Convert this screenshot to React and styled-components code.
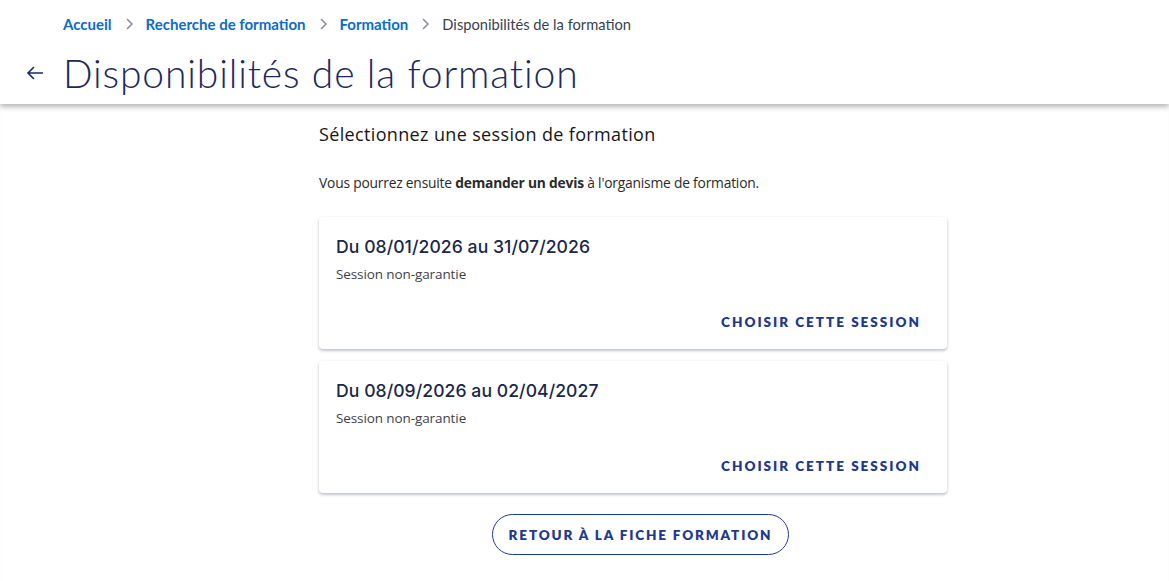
import React from "react";
import styled, { createGlobalStyle } from "styled-components";

const GlobalStyle = createGlobalStyle`
  * { box-sizing: border-box; }
  body {
    margin: 0;
    background: #fff;
    font-family: "Lato", "Noto Sans", sans-serif;
    color: #1f2a44;
  }
`;

const sessions = [
  { id: 1, from: "08/01/2026", to: "31/07/2026", status: "Session non-garantie" },
  { id: 2, from: "08/09/2026", to: "02/04/2027", status: "Session non-garantie" },
];

const crumbs = [
  { label: "Accueil", link: true },
  { label: "Recherche de formation", link: true },
  { label: "Formation", link: true },
  { label: "Disponibilités de la formation", link: false },
];

const App = () => {
  return (
    <Page>
      <GlobalStyle />
      <Header>
        <Breadcrumb>
          {crumbs.map((c, i) => (
            <React.Fragment key={c.label}>
              {i > 0 && (
                <Chevron viewBox="0 0 10 14" aria-hidden="true">
                  <path d="M3 2l5 5-5 5" fill="none" stroke="#8a8f9c" strokeWidth="1.6" />
                </Chevron>
              )}
              <Crumb $link={c.link}>{c.label}</Crumb>
            </React.Fragment>
          ))}
        </Breadcrumb>
        <TitleRow>
          <BackButton aria-label="Retour">
            <svg width="18" height="16" viewBox="0 0 18 16">
              <path
                d="M17 8H2M8 2L2 8l6 6"
                fill="none"
                stroke="#1b2a5c"
                strokeWidth="1.6"
              />
            </svg>
          </BackButton>
          <Title>Disponibilités de la formation</Title>
        </TitleRow>
      </Header>

      <Main>
        <Column>
          <Heading>Sélectionnez une session de formation</Heading>
          <Intro>
            Vous pourrez ensuite <strong>demander un devis</strong> à l'organisme de formation.
          </Intro>
          <CardList>
            {sessions.map((s) => (
              <Card key={s.id}>
                <CardTitle>
                  Du {s.from} au {s.to}
                </CardTitle>
                <CardSub>{s.status}</CardSub>
                <CardActions>
                  <TextButton>Choisir cette session</TextButton>
                </CardActions>
              </Card>
            ))}
          </CardList>
          <Footer>
            <OutlineButton>Retour à la fiche formation</OutlineButton>
          </Footer>
        </Column>
      </Main>
    </Page>
  );
};

const Page = styled.div`
  min-height: 100vh;
  background: #fff;
  box-shadow: inset 0 4px 4px -2px rgba(0, 0, 0, 0.08);
`;

const Header = styled.header`
  position: relative;
  z-index: 1;
  background: #fff;
  padding: 13px 0 0 0;
  height: 104px;
  box-shadow: 0 3px 5px rgba(0, 0, 0, 0.28);
`;

const Breadcrumb = styled.nav`
  display: flex;
  align-items: center;
  gap: 12px;
  padding-left: 63px;
  height: 22px;
`;

const Chevron = styled.svg`
  width: 10px;
  height: 14px;
`;

const Crumb = styled.span`
  font-family: "Lato", sans-serif;
  font-size: ${({ $link }) => ($link ? "15px" : "14.7px")};
  font-weight: ${({ $link }) => ($link ? 700 : 400)};
  color: ${({ $link }) => ($link ? "#0d6bc7" : "#3a3f4b")};
`;

const TitleRow = styled.div`
  display: flex;
  align-items: center;
  margin-top: 16px;
  padding-left: 26px;
`;

const BackButton = styled.button`
  border: none;
  background: none;
  padding: 0;
  margin-right: 19px;
  display: flex;
  align-items: center;
  cursor: pointer;
`;

const Title = styled.h1`
  margin: 0;
  font-family: "Lato", sans-serif;
  font-weight: 300;
  font-size: 39px;
  letter-spacing: 0.85px;
  line-height: 44px;
  color: #1b2a5c;
`;

const Main = styled.main`
  padding-left: 319px;
  width: 947px;
`;

const Column = styled.div`
  display: flex;
  flex-direction: column;
`;

const Heading = styled.h2`
  margin: 18px 0 0 0;
  font-family: "Open Sans", sans-serif;
  font-weight: 500;
  font-size: 18px;
  letter-spacing: 0.35px;
  line-height: 25px;
  color: #161616;
`;

const Intro = styled.p`
  margin: 26px 0 0 0;
  font-family: "Open Sans", sans-serif;
  font-size: 13.8px;
  letter-spacing: -0.2px;
  line-height: 20px;
  color: #2a2a2a;
  strong {
    font-weight: 700;
  }
`;

const CardList = styled.div`
  display: flex;
  flex-direction: column;
  gap: 12px;
  margin-top: 24px;
`;

const Card = styled.div`
  background: #fff;
  border-radius: 4px;
  height: 132px;
  padding: 18px 26px 0 17px;
  box-shadow: 0 1px 3px rgba(0, 0, 0, 0.12), 0 2px 3px rgba(60, 70, 110, 0.22);
  display: flex;
  flex-direction: column;
`;

const CardTitle = styled.div`
  font-family: "Inter", sans-serif;
  font-weight: 500;
  font-size: 17.6px;
  letter-spacing: 0.05px;
  line-height: 24px;
  color: #1b2748;
`;

const CardSub = styled.div`
  margin-top: 6px;
  font-family: "Open Sans", sans-serif;
  font-size: 13.5px;
  letter-spacing: -0.1px;
  color: #3d3f4c;
`;

const CardActions = styled.div`
  display: flex;
  justify-content: flex-end;
  margin-top: 31px;
`;

const TextButton = styled.button`
  border: none;
  background: none;
  padding: 0;
  font-family: "Lato", sans-serif;
  font-weight: 800;
  font-size: 13.5px;
  letter-spacing: 2px;
  text-transform: uppercase;
  color: #1f3a8c;
  cursor: pointer;
`;

const Footer = styled.div`
  display: flex;
  justify-content: center;
  margin-top: 21px;
  padding-left: 15px;
`;

const OutlineButton = styled.button`
  height: 41px;
  width: 297px;
  border: 1.5px solid #1f3a8c;
  border-radius: 21px;
  background: #fff;
  font-family: "Lato", sans-serif;
  font-weight: 800;
  font-size: 13.5px;
  letter-spacing: 1.85px;
  text-transform: uppercase;
  color: #1f3a8c;
  cursor: pointer;
`;

export default App;
